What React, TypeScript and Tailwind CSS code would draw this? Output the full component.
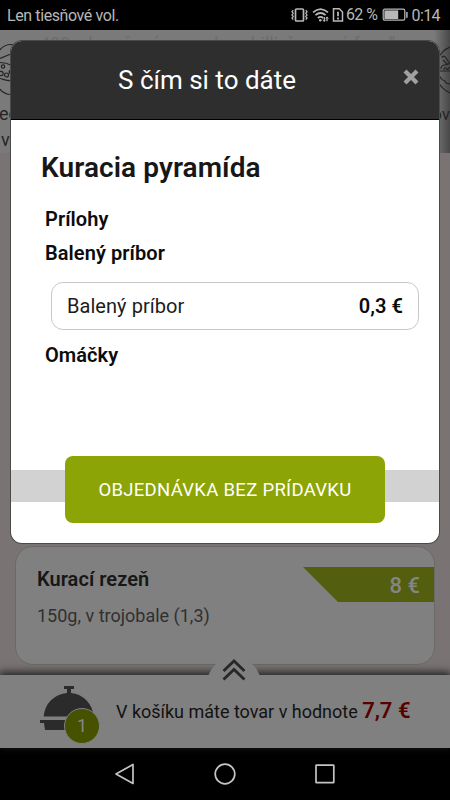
import { useState } from "react";

type Extra = { id: string; name: string; price: string };
type ExtraGroup = { title: string; items: Extra[] };

const groups: ExtraGroup[] = [
  { title: "Prílohy", items: [] },
  {
    title: "Balený príbor",
    items: [{ id: "pribor", name: "Balený príbor", price: "0,3 €" }],
  },
  { title: "Omáčky", items: [] },
];

function StatusBar() {
  return (
    <header className="flex h-[30px] shrink-0 items-center bg-black pl-[7px] pr-[10px] text-[#b8b8b8]">
      <span className="pt-[2px] text-[16px] leading-none tracking-[-0.4px]">Len tiesňové vol.</span>
      <div className="ml-auto flex items-center">
        {/* vibrate */}
        <svg width="19" height="16" viewBox="0 0 19 16" fill="none" stroke="currentColor" strokeWidth="1.3">
          <rect x="5.5" y="2" width="8" height="12" rx="1" strokeWidth="1.7" />
          <path d="M3.2 3.2 2 4.7l1.2 1.6L2 7.9l1.2 1.6L2 11l1.2 1.6M15.8 3.2 17 4.7l-1.2 1.6L17 7.9l-1.2 1.6L17 11l-1.2 1.6" />
        </svg>
        {/* wifi */}
        <svg className="ml-[3px]" width="18" height="16" viewBox="0 0 18 16" fill="none" stroke="currentColor" strokeWidth="1.7">
          <path d="M1 5.4Q8.5-1.2 16 5.4M3.4 8.2Q8.5 3.8 13.6 8.2M5.8 11Q8.5 8.6 11.2 11" />
          <circle cx="8.3" cy="13.2" r="1.3" fill="currentColor" stroke="none" />
          <path d="M12.3 10v4.2M15 14.2V10" strokeWidth="1.3" />
          <path d="m10.8 12.8 1.5 1.8 1.2-1.8M13.7 11.6 15 9.9l1.5 1.7" strokeWidth=".8" />
        </svg>
        {/* sim warning */}
        <svg className="ml-[2px]" width="12" height="16" viewBox="0 0 12 16" fill="none" stroke="currentColor" strokeWidth="1.5">
          <path d="M1.5 1.8h5.8l3.2 3.2v9h-9z" />
          <path d="M6 4.7v4.6M6 10.6v1.9" strokeWidth="1.8" />
        </svg>
        <span className="ml-[2px] text-[16px] leading-none tracking-[-0.5px]">62 %</span>
        <svg className="ml-[4px]" width="26" height="14" viewBox="0 0 26 14" fill="none" stroke="currentColor">
          <rect x="1.2" y="1.2" width="21.6" height="11" rx="1.6" strokeWidth="1.2" />
          <rect x="2.4" y="2.4" width="13.8" height="8.6" fill="currentColor" stroke="none" />
          <path d="M24.9 4v5.8" strokeWidth="1.5" />
        </svg>
        <span className="ml-[4px] pt-[2px] text-[16px] leading-none tracking-[-0.6px]">0:14</span>
      </div>
    </header>
  );
}

function CategoryStrip() {
  return (
    <div className="relative h-[123px] shrink-0 overflow-hidden bg-[#7a7a7a] text-[#252525]">
      <p className="pl-[40px] pt-[2px] text-[18px] leading-[24px] whitespace-nowrap text-[#6d6d6d]">
        400g, bravčová panenka, chilli, červená fazuľa
      </p>
      <svg className="absolute left-0 top-[13px]" width="24" height="52" viewBox="0 0 24 52" fill="none" stroke="currentColor" strokeWidth="1.2">
        <ellipse cx="11" cy="26.500" rx="18" ry="25" />
        <path d="M0 15.500 12 10.500M0 19.500c4 0 8 1 12 3M0 35.500c4 1 8 3 12 2" />
        <circle cx="3" cy="23.500" r="1.7" />
        <circle cx="1" cy="30.500" r="2.200" />
        <circle cx="6.500" cy="32" r="2" />
        <circle cx="10.800" cy="29" r="1.700" />
      </svg>
      <span className="absolute left-[-1px] top-[72px] text-[18px] leading-[24px]">ec</span>
      <span className="absolute left-px top-[98px] text-[18px] leading-[24px]">va</span>
      <div className="absolute right-0 top-0 h-full w-4 bg-gradient-to-r from-transparent to-[#484848]" />
      <svg className="absolute right-0 top-[14px]" width="14" height="52" viewBox="0 0 14 52" fill="none" stroke="currentColor" strokeWidth="1.2">
        <circle cx="24" cy="26" r="25" />
        <path d="M1 27h13M2 27c1 6 3 9 7 10l1 2 5 1M5 25c0-3 2-4 4-4s3-2 5-1M6 14c0-3 3-2 4 0l4 6M7 16l5 5M8 26c0-3 3-3 3 0M12 26c0-2 2-3 2-3" />
      </svg>
      <span className="absolute right-0 top-[72px] text-[17px] leading-[24px]">ov</span>
    </div>
  );
}

function DishCard() {
  return (
    <article className="mx-[15px] flex h-[119px] justify-between rounded-[18px] border border-[#6b6968] bg-[#808080]">
      <div className="pl-[21px] pt-[20px]">
        <h3 className="text-[20px] leading-[24px] font-semibold tracking-[0.05px] text-[#171717]">Kurací rezeň</h3>
        <p className="mt-[14px] text-[18px] leading-[22px] text-[#303030]">150g, v trojobale (1,3)</p>
      </div>
      <div className="mt-[20px] flex h-[35px] w-[131px] items-center justify-end bg-[#535e0e] pr-[14px] text-[22px] leading-none font-medium text-[#858585] [clip-path:polygon(0_0,100%_0,100%_100%,35px_100%)]">
        <span className="pt-[2px]">8 €</span>
      </div>
    </article>
  );
}

function CartBar({ count }: { count: number }) {
  return (
    <footer className="relative h-[73px] shrink-0 bg-[#808080] shadow-[0_-2px_8px_1px_#222]">
      <div className="absolute left-[207px] top-[-18px] flex h-[18px] w-[54px] overflow-hidden">
        <div className="h-[54px] w-[54px] shrink-0 rounded-full bg-[#808080]" />
      </div>
      <svg className="absolute left-[222px] top-[-17px]" width="24" height="24" viewBox="0 0 24 24" fill="none" stroke="#272727" strokeWidth="2.800">
        <path d="m1.500 13 10.500-10 10.500 10M1.500 21.500l10.500-10 10.500 10" />
      </svg>
      <div className="flex h-full items-center">
        <div className="relative ml-[40px] mt-[-5px] h-[46px] w-[60px]">
          <svg width="56" height="46" viewBox="0 0 56 46" fill="#2b2b2b">
            <path d="M24 0h10v3h-3v4A25 25 0 0 1 53.500 30.500H3.700A25 25 0 0 1 27 7V3h-3zM0 34h56v3h-4l-1 7H5l-1-7H0z" />
          </svg>
          <span className="absolute left-[24px] top-[22px] flex h-[36px] w-[36px] items-center justify-center rounded-full border border-[#808080] bg-[#465200] text-[18px] leading-none text-[#858585]">
            {count}
          </span>
        </div>
        <p className="ml-[16px] whitespace-nowrap text-[18px] leading-[28px] tracking-[-0.01px] text-[#121212]">
          V košíku máte tovar v hodnote <b className="text-[22px] font-semibold text-[#580000]">7,7 €</b>
        </p>
      </div>
    </footer>
  );
}

function ExtrasDialog({ onClose }: { onClose: () => void }) {
  return (
    <section
      role="dialog"
      className="absolute left-[11px] top-[41px] flex h-[502px] w-[428px] flex-col overflow-hidden rounded-[11px] bg-white shadow-[0_0_0_1px_#4a4a4a]"
    >
      <div className="flex h-[79px] shrink-0 items-center border-b border-black bg-[#2e2e2e]">
        <h1 className="ml-[107px] text-[26px] leading-none text-white">S čím si to dáte</h1>
        <button type="button" aria-label="Zavrieť" onClick={onClose} className="mt-[-6px] ml-auto mr-[20px]">
          <svg width="16" height="18" viewBox="0 0 16 18" fill="none" stroke="#a0a0a0" strokeWidth="4.200">
            <path d="m2 3 12 12M14 3 2 15" />
          </svg>
        </button>
      </div>

      <div className="flex-1 pt-[32px] text-[#0c0c0c]">
        <h2 className="pl-[30px] text-[28px] leading-[32px] font-semibold tracking-[0.08px] text-[#171717]">
          Kuracia pyramída
        </h2>
        <div className="mt-[18px] pl-[34px] pr-[20px]">
          {groups.map((group) => (
            <div key={group.title}>
              <h3 className="text-[20px] leading-[34px] font-semibold tracking-[0.07px]">{group.title}</h3>
              {group.items.map((item) => (
                <button
                  key={item.id}
                  type="button"
                  className="mb-[8px] ml-[6px] mt-[12px] flex h-[48px] w-[368px] items-center justify-between rounded-[12px] border border-[#c8c8c8] px-[15px] text-[20px] tracking-[0.05px]"
                >
                  <span className="text-[#1c1c1c]">{item.name}</span>
                  <span className="font-semibold">{item.price}</span>
                </button>
              ))}
            </div>
          ))}
        </div>
      </div>

      <div className="mb-[20px] flex h-[67px] shrink-0 items-center justify-center bg-[linear-gradient(to_bottom,transparent_14px,#d2d2d2_14px,#d2d2d2_46px,transparent_46px)]">
        <button
          type="button"
          onClick={onClose}
          className="h-[67px] w-[320px] rounded-[8px] bg-[#8ca405] pt-[3px] text-[18.5px] tracking-[0.3px] font-[450] text-white"
        >
          OBJEDNÁVKA BEZ PRÍDAVKU
        </button>
      </div>
    </section>
  );
}

function NavBar() {
  return (
    <nav className="flex h-[52px] shrink-0 items-center justify-center gap-[78px] bg-black">
      <svg width="22" height="22" viewBox="0 0 22 22" fill="none" stroke="#c4c4c4" strokeWidth="1.700" strokeLinejoin="round">
        <path d="M19 1.500v19L2 11z" />
      </svg>
      <svg width="22" height="22" viewBox="0 0 22 22" fill="none" stroke="#c4c4c4" strokeWidth="1.700">
        <circle cx="11" cy="11" r="9.800" />
      </svg>
      <svg width="22" height="22" viewBox="0 0 22 22" fill="none" stroke="#c4c4c4" strokeWidth="1.700">
        <rect x="2" y="2.200" width="17.800" height="17.500" rx="0.500" />
      </svg>
    </nav>
  );
}

export default function App() {
  const [open, setOpen] = useState(true);

  return (
    <div className="relative flex h-[800px] w-[450px] flex-col overflow-hidden bg-[#797473] font-[Roboto,sans-serif]">
      <StatusBar />
      <main className="flex flex-1 flex-col">
        <CategoryStrip />
        <div className="mt-auto pb-[10px]">
          <DishCard />
        </div>
      </main>
      <CartBar count={1} />
      <NavBar />
      {open && <ExtrasDialog onClose={() => setOpen(false)} />}
    </div>
  );
}
